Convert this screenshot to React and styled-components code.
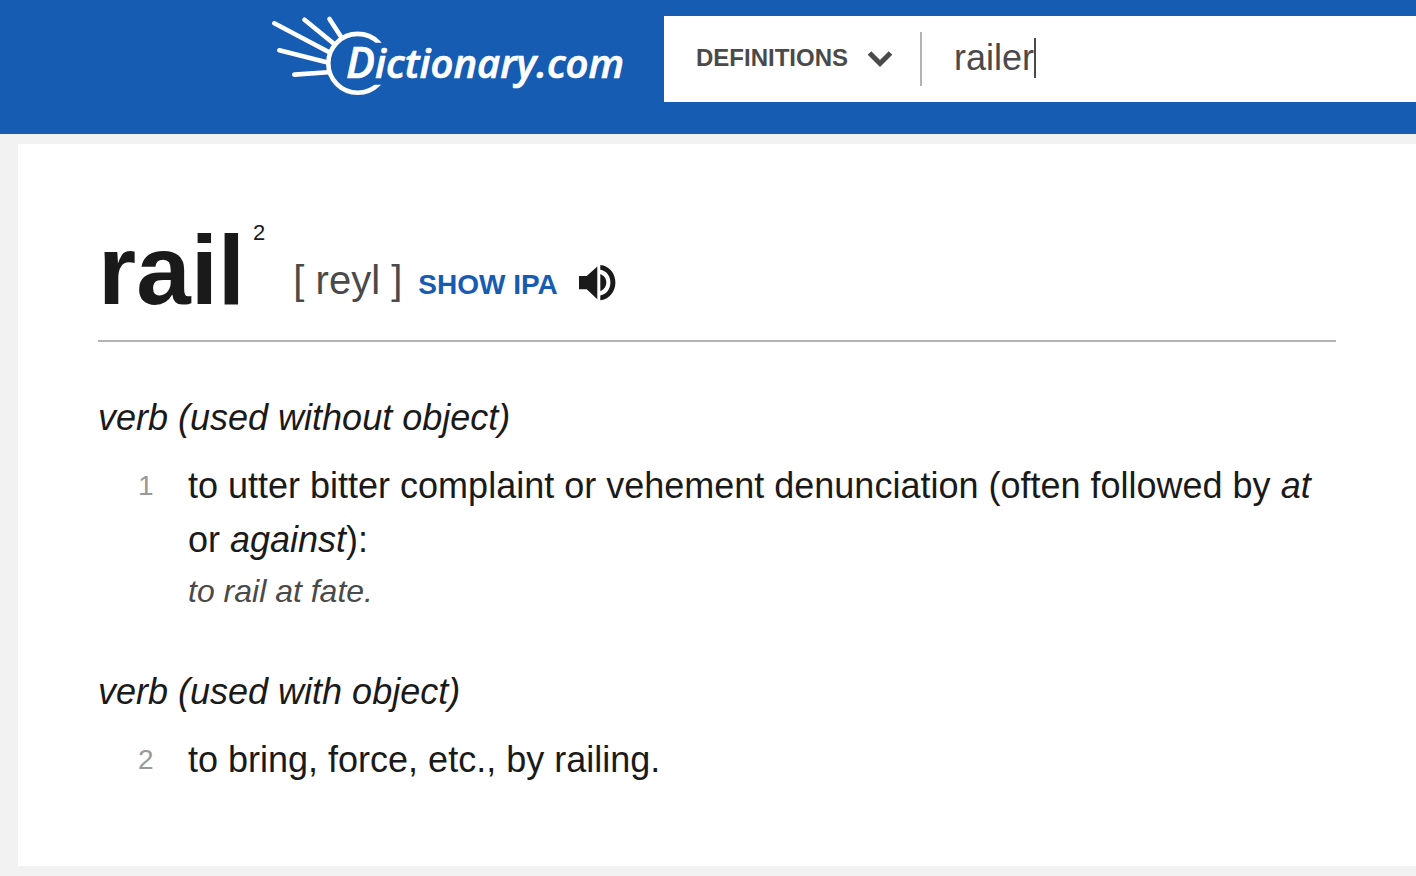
import React, { Component } from 'react';
import styled, { createGlobalStyle } from 'styled-components';

class App extends Component {
	state = { term: 'railer' };

	handleChange = event => this.setState({ term: event.target.value });

	render() {
		return (
			<React.Fragment>
				<GlobalStyle />
				<Header>
					<LogoLink href="/" aria-label="Dictionary.com">
						<Logo />
					</LogoLink>
					<SearchBar role="search">
						<Picker>
							<Select aria-label="Search in" defaultValue="definitions">
								<option value="definitions">DEFINITIONS</option>
								<option value="synonyms">SYNONYMS</option>
							</Select>
							<Chevron viewBox="0 0 26 18" aria-hidden="true">
								<path d="M2.5 3 L13 13.5 L23.5 3" />
							</Chevron>
						</Picker>
						<Field>
							<Input
								type="text"
								aria-label="Search term"
								value={this.state.term}
								onChange={this.handleChange}
							/>
							<Caret />
						</Field>
					</SearchBar>
				</Header>
				<Entry>
					<EntryHead>
						<Word>rail</Word>
						<Homograph>2</Homograph>
						<Pronunciation>
							<Spelling>[ reyl ]</Spelling>
							<IpaButton type="button">SHOW IPA</IpaButton>
							<AudioButton type="button" aria-label="Play pronunciation">
								<svg width="38" height="38" viewBox="0 0 38 38">
									<path d="M1 12H8.7L19.3 2.5V35.2L8.7 25.2H1Z" />
									<path d="M22.3 10C26 11.5 28.3 14.6 28.3 18.6S26 25.8 22.3 27.3Z" />
									<path d="M22.3 1C31 1.6 37.4 9.3 37.4 18.6S31 35.7 22.3 36.3V31.4C28.2 30.6 32.4 25.4 32.4 18.6S28.2 6.6 22.3 5.8Z" />
								</svg>
							</AudioButton>
						</Pronunciation>
					</EntryHead>
					<Section>
						<PartOfSpeech>verb (used without object)</PartOfSpeech>
						<Sense>
							<Number>1</Number>
							<div>
								<Definition>
									to utter bitter complaint or vehement denunciation (often
									followed by <em>at</em> or <em>against</em>):
								</Definition>
								<Example>to rail at fate.</Example>
							</div>
						</Sense>
					</Section>
					<Section>
						<PartOfSpeech>verb (used with object)</PartOfSpeech>
						<Sense>
							<Number>2</Number>
							<Definition>to bring, force, etc., by railing.</Definition>
						</Sense>
					</Section>
				</Entry>
			</React.Fragment>
		);
	}
}

const Logo = () => (
	<svg width="352" height="82" viewBox="0 0 352 82" overflow="visible">
		<defs>
			<clipPath id="ring">
				<path d="M50 0H120V26.7H80V68.7H120V82H50Z" />
			</clipPath>
		</defs>
		<g fill="none" stroke="#fff" strokeWidth="4.6" strokeLinecap="round">
			<circle cx="85.7" cy="47.3" r="29.4" clipPath="url(#ring)" />
			<path d="M2.3 7.3L56.3 35.7M32.5 3.7L61.3 27.3M57.5 3L69 20.7M7.3 34.3L54.7 46.3M22.3 58.6L56 56.3" />
		</g>
		<LogoText x="74" y="62">
			<tspan fontSize="43">D</tspan>
			<tspan fontSize="40">ictionary.com</tspan>
		</LogoText>
	</svg>
);

export default App;

const GlobalStyle = createGlobalStyle`
	* {
		box-sizing: border-box;
	}

	body {
		margin: 0;
		background: #f2f2f2;
		color: #1a1a1a;
		font-family: 'Liberation Sans', Arial, sans-serif;
	}
`;

const Header = styled.header`
	display: flex;
	gap: 40px;
	padding: 16px 0 32px 272px;
	background: #165cb3;
`;

const LogoLink = styled.a`
	flex: none;
	height: 82px;
`;

const LogoText = styled.text`
	fill: #fff;
	stroke: #fff;
	stroke-width: 0.7;
	font-family: 'Open Sans', 'Noto Sans', sans-serif;
	font-style: italic;
	font-weight: 600;
`;

const SearchBar = styled.form`
	display: flex;
	flex: 1;
	align-items: center;
	height: 86px;
	padding-left: 32px;
	background: #fff;
	color: #4a4a4a;
`;

const Picker = styled.div`
	display: flex;
	align-items: center;
	gap: 18px;
	height: 54px;
	padding-right: 27px;
	border-right: 2px solid #b3b3b3;
`;

const Select = styled.select`
	appearance: none;
	padding: 0 0 2px;
	border: 0;
	background: none;
	color: inherit;
	font: 700 24px/54px 'Liberation Sans', Arial, sans-serif;
`;

const Chevron = styled.svg`
	width: 26px;
	height: 18px;
	fill: none;
	stroke: #4a4a4a;
	stroke-width: 5;
`;

const Field = styled.div`
	display: flex;
	flex: 1;
	align-items: center;
	padding: 0 0 2px 32px;
`;

const Input = styled.input`
	field-sizing: content;
	padding: 0;
	border: 0;
	outline: 0;
	background: none;
	color: inherit;
	caret-color: transparent;
	font: 36px/54px 'Liberation Sans', Arial, sans-serif;
`;

const Caret = styled.span`
	width: 2px;
	height: 40px;
	background: #4a4a4a;
`;

const Entry = styled.main`
	margin: 10px 0 10px 18px;
	padding: 66px 80px 79px;
	background: #fff;
`;

const EntryHead = styled.div`
	display: flex;
	align-items: flex-end;
	padding-bottom: 10px;
	border-bottom: 2px solid #b3b3b3;
`;

const Word = styled.h1`
	margin: 0;
	font-size: 98px;
	line-height: 120px;
`;

const Homograph = styled.sup`
	align-self: flex-start;
	margin: 0 28px 0 8px;
	font-size: 22px;
	line-height: 46px;
`;

const Pronunciation = styled.div`
	display: flex;
	align-items: baseline;
	margin-bottom: 15px;
	line-height: 60px;
`;

const Spelling = styled.span`
	color: #4a4a4a;
	font-size: 40px;
`;

const IpaButton = styled.button`
	margin: 0 20px 0 16px;
	padding: 0;
	border: 0;
	background: none;
	color: #165cb3;
	font: 700 28px/60px 'Liberation Sans', Arial, sans-serif;
`;

const AudioButton = styled.button`
	display: flex;
	align-self: center;
	padding: 0;
	border: 0;
	background: none;
	fill: #1a1a1a;
`;

const Section = styled.section`
	margin-top: 49px;
	font-size: 36px;
	line-height: 54px;

	& + & {
		margin-top: 50px;
	}
`;

const PartOfSpeech = styled.h2`
	margin: 0 0 14px;
	font-size: 36px;
	font-style: italic;
	font-weight: 400;
`;

const Sense = styled.div`
	display: grid;
	grid-template-columns: 50px 1fr;
	padding-left: 40px;
`;

const Number = styled.span`
	color: #999;
	font-size: 28px;
`;

const Definition = styled.p`
	margin: 0;
`;

const Example = styled.p`
	margin: 0;
	color: #4a4a4a;
	font-size: 32px;
	font-style: italic;
	line-height: 48px;
`;
